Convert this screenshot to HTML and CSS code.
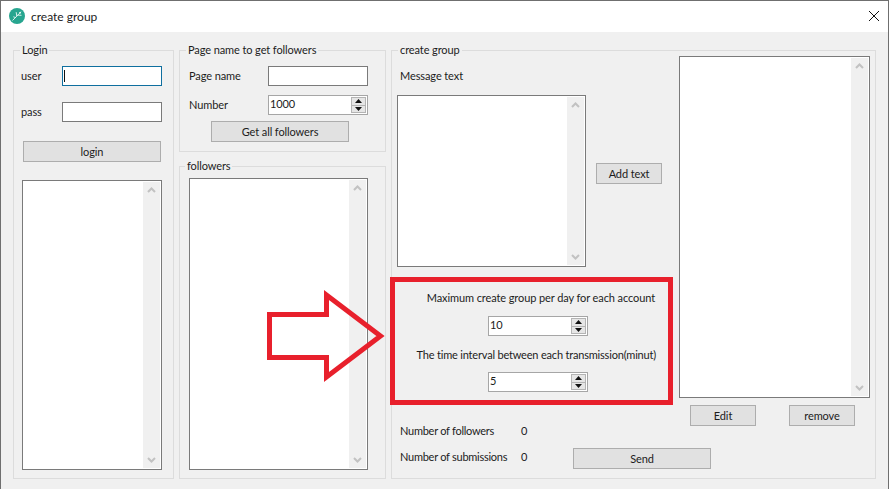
FILE: index.html
```html
<!DOCTYPE html>
<html lang="en">
<head>
<meta charset="utf-8">
<title>create group</title>
<link rel="stylesheet" href="styles.css">
</head>
<body>
<svg class="defs" width="0" height="0" aria-hidden="true">
  <symbol id="chev-up" viewBox="0 0 9 6"><path d="M1 5 4.500 1.500 8 5" fill="none" stroke="currentColor" stroke-width="2"/></symbol>
  <symbol id="chev-down" viewBox="0 0 9 6"><path d="M1 1 4.500 4.500 8 1" fill="none" stroke="currentColor" stroke-width="2"/></symbol>
  <symbol id="tri-up" viewBox="0 0 7 4"><path d="M3.500 0 7 4H0Z" fill="currentColor"/></symbol>
  <symbol id="tri-down" viewBox="0 0 7 4"><path d="M0 0H7L3.500 4Z" fill="currentColor"/></symbol>
</svg>
<div class="window">
  <header class="titlebar">
    <svg class="app-icon" viewBox="0 0 16 16" width="16" height="16" aria-hidden="true">
      <circle cx="8" cy="8" r="8" fill="#27a58f"/>
      <path d="M3.500 12.500 12 3.800M7.800 8.100 7.200 4.200M8.800 7.100 12.500 7.300M6.500 9.500 4.300 8.800" fill="none" stroke="#eef9f6" stroke-width="0.900"/>
      <path d="M9.800 4.200 12 3.800 11.400 6Z" fill="#eef9f6"/>
    </svg>
    <span class="title">create group</span>
    <svg class="close" viewBox="0 0 10 10" width="10" height="10" aria-hidden="true">
      <path d="M0 0 10 10M10 0 0 10" stroke="#111" stroke-width="1" fill="none"/>
    </svg>
  </header>

  <main class="form">
    <section class="group group-login">
      <span class="legend legend-login">Login</span>
      <div class="row row-user"><label class="label label-login">user</label><div class="field field-focus"><span class="caret"></span></div></div>
      <div class="row row-pass"><label class="label label-login">pass</label><div class="field"></div></div>
      <button class="btn btn-login">login</button>
      <div class="list list-accounts">
        <div class="scroll"><svg class="chev"><use href="#chev-up"/></svg><svg class="chev"><use href="#chev-down"/></svg></div>
      </div>
    </section>

    <div class="col-middle">
      <section class="group group-page">
        <span class="legend legend-page">Page name to get followers</span>
        <div class="row row-user row-page"><label class="label label-page">Page name</label><div class="field"></div></div>
        <div class="row row-number row-page"><label class="label label-page">Number</label>
          <div class="spin"><span class="spin-value">1000</span><div class="spin-btns"><span class="spin-btn"><svg class="tri"><use href="#tri-up"/></svg></span><span class="spin-btn"><svg class="tri"><use href="#tri-down"/></svg></span></div></div>
        </div>
        <button class="btn btn-get">Get all followers</button>
      </section>
      <section class="group group-followers">
        <span class="legend legend-followers">followers</span>
        <div class="list list-followers">
          <div class="scroll"><svg class="chev"><use href="#chev-up"/></svg><svg class="chev"><use href="#chev-down"/></svg></div>
        </div>
      </section>
    </div>

    <section class="group group-create">
      <div class="create-left">
        <span class="legend legend-create">create group</span>
        <div class="label message-label">Message text</div>
        <div class="message-row">
          <div class="list list-message">
            <div class="scroll"><svg class="chev"><use href="#chev-up"/></svg><svg class="chev"><use href="#chev-down"/></svg></div>
          </div>
          <button class="btn btn-add">Add text</button>
        </div>
        <div class="highlight">
          <div class="label hl-text hl-text-first">Maximum create group per day for each account</div>
          <div class="spin spin-hl spin-first"><span class="spin-value">10</span><div class="spin-btns"><span class="spin-btn"><svg class="tri"><use href="#tri-up"/></svg></span><span class="spin-btn"><svg class="tri"><use href="#tri-down"/></svg></span></div></div>
          <div class="label hl-text hl-text-second">The time interval between each transmission(minut)</div>
          <div class="spin spin-hl spin-second"><span class="spin-value">5</span><div class="spin-btns"><span class="spin-btn"><svg class="tri"><use href="#tri-up"/></svg></span><span class="spin-btn"><svg class="tri"><use href="#tri-down"/></svg></span></div></div>
        </div>
        <div class="stat stat-first"><span class="label stat-label">Number of followers</span><span class="label stat-count">0</span></div>
        <div class="stat stat-second"><span class="label stat-label">Number of submissions</span><span class="label stat-count">0</span><button class="btn btn-send">Send</button></div>
      </div>
      <div class="create-right">
        <div class="list list-messages">
          <div class="scroll"><svg class="chev"><use href="#chev-up"/></svg><svg class="chev"><use href="#chev-down"/></svg></div>
        </div>
        <div class="list-actions">
          <button class="btn btn-small">Edit</button>
          <button class="btn btn-small">remove</button>
        </div>
      </div>
    </section>
  </main>

  <svg class="arrow" viewBox="0 0 124 100" width="124" height="100" aria-hidden="true">
    <path d="M3.500 25.500H60.500V6L114.500 47 60.500 88V68.500H3.500Z" fill="none" stroke="#e8202c" stroke-width="5"/>
  </svg>
</div>
</body>
</html>
```

FILE: styles.css
```css
* { box-sizing: border-box; }

html, body {
  margin: 0;
  padding: 0;
  background: #f0f0f0;
}

.defs { position: absolute; }

.window {
  position: relative;
  width: 889px;
  height: 489px;
  display: flex;
  flex-direction: column;
  border: 1px solid #6f6f6f;
  border-bottom: 0;
  font-family: Lato, Roboto, sans-serif;
  font-size: 11px;
  letter-spacing: -0.1px;
  line-height: 14px;
  color: #1c1c1c;
  overflow: hidden;
}

.titlebar {
  height: 31px;
  flex: none;
  display: flex;
  align-items: center;
  background: #fff;
  padding-left: 8px;
  padding-right: 9px;
}

.app-icon { flex: none; margin-top: -1px; }
.title { margin-left: 6px; font-size: 12px; letter-spacing: 0; flex: 1; }
.close { flex: none; margin-top: -1px; }

.form {
  flex: 1;
  display: flex;
  align-items: flex-start;
  gap: 5px;
  background: #f0f0f0;
  padding: 18px 0 0 12px;
}

.group {
  border: 1px solid #dcdcdc;
  display: flex;
  flex-direction: column;
  align-items: flex-start;
}

.legend {
  height: 14px;
  margin-top: -8px;
  padding: 0 2px;
  background: #f0f0f0;
  white-space: nowrap;
}

.row { display: flex; align-items: center; height: 20px; }

.label { white-space: nowrap; }

.field {
  width: 100px;
  height: 20px;
  background: #fff;
  border: 1px solid #7a7a7a;
  padding: 3px 0 0 1px;
}

.field-focus { border-color: #0f6f9f; }

.caret {
  display: block;
  width: 1px;
  height: 12px;
  background: #111;
}

.btn {
  display: block;
  height: 21px;
  padding: 0;
  border: 1px solid #adadad;
  border-radius: 0;
  background: #e1e1e1;
  font: inherit;
  letter-spacing: inherit;
  color: inherit;
}

.list {
  display: flex;
  justify-content: flex-end;
  padding: 1px;
  background: #fff;
  border: 1px solid #7a7a7a;
}

.scroll {
  width: 17px;
  display: flex;
  flex-direction: column;
  justify-content: space-between;
  align-items: center;
  padding: 5px 0;
  background: #f0f0f0;
  color: #c2c2c2;
}

.chev { display: block; width: 9px; height: 6px; }

.spin {
  width: 100px;
  height: 20px;
  display: flex;
  align-items: center;
  background: #fff;
  border: 1px solid #a6a6a6;
  padding: 1px;
}

.spin-value { flex: 1; margin-top: -2px; }

.spin-btns {
  width: 15px;
  height: 16px;
  display: flex;
  flex-direction: column;
}

.spin-btn {
  flex: 1;
  display: flex;
  align-items: center;
  justify-content: center;
  background: #e6e6e6;
  border: 1px solid #b4b4b4;
  color: #111;
}

.spin-btn + .spin-btn { border-top: 0; }

.tri { display: block; width: 7px; height: 4px; }

/* Login */
.group-login { width: 161px; height: 429px; }
.legend-login { margin-left: 6px; }
.row-user { margin-top: 9px; }
.row-pass { margin-top: 16px; }
.label-login { width: 41px; margin-left: 7px; margin-top: -1px; }
.btn-login { width: 138px; margin: 19px 0 0 9px; }
.list-accounts { width: 140px; height: 290px; margin: 18px 0 0 8px; }

/* Middle column */
.col-middle {
  width: 207px;
  display: flex;
  flex-direction: column;
  gap: 14px;
}
.group-page { height: 102px; }
.legend-page { margin-left: 6px; }
.row-page { padding-left: 9px; }
.row-number { margin-top: 9px; }
.label-page { width: 79px; }
.btn-get { width: 138px; margin: 6px 0 0 31px; }

.group-followers { height: 313px; }
.legend-followers { margin-left: 5px; }
.list-followers { width: 179px; height: 292px; margin: 5px 0 0 9px; }

/* Create group */
.group-create {
  width: 485px;
  height: 429px;
  flex-direction: row;
}
.create-left {
  width: 287px;
  flex: none;
  display: flex;
  flex-direction: column;
  align-items: flex-start;
}
.legend-create { margin-left: 6px; }
.message-label { margin: 12px 0 0 8px; }
.message-row { display: flex; align-items: flex-start; margin: 12px 0 0 5px; }
.list-message { width: 189px; height: 172px; }
.btn-add { width: 66px; margin: 68px 0 0 10px; }

.highlight {
  width: 283px;
  height: 128px;
  margin: 10px 0 0 -2px;
  border: 5px solid #e8202c;
  display: flex;
  flex-direction: column;
  align-items: flex-end;
  padding-right: 13px;
}
.hl-text-first { margin-top: 9px; }
.hl-text-second { margin-top: 12px; margin-right: -1px; letter-spacing: -0.19px; }
.spin-hl { margin-right: 67px; }
.spin-first { margin-top: 11px; }
.spin-second { margin-top: 10px; }

.stat { display: flex; align-items: flex-start; margin-left: 8px; }
.stat-first { margin-top: 19px; }
.stat-second { margin-top: 10px; }
.stat-label { width: 121px; letter-spacing: -0.26px; }
.stat-second .stat-label, .stat-second .stat-count { margin-top: 2px; }
.stat-count { width: 52px; }
.btn-send { width: 138px; }

.create-right {
  width: 191px;
  flex: none;
  display: flex;
  flex-direction: column;
}
.list-messages { height: 342px; margin-top: 5px; }
.list-actions { display: flex; gap: 33px; margin: 7px 0 0 11px; }
.btn-small { width: 66px; }

/* Annotation arrow drawn over the form */
.arrow {
  position: absolute;
  left: 265px;
  top: 288px;
  pointer-events: none;
}
```
